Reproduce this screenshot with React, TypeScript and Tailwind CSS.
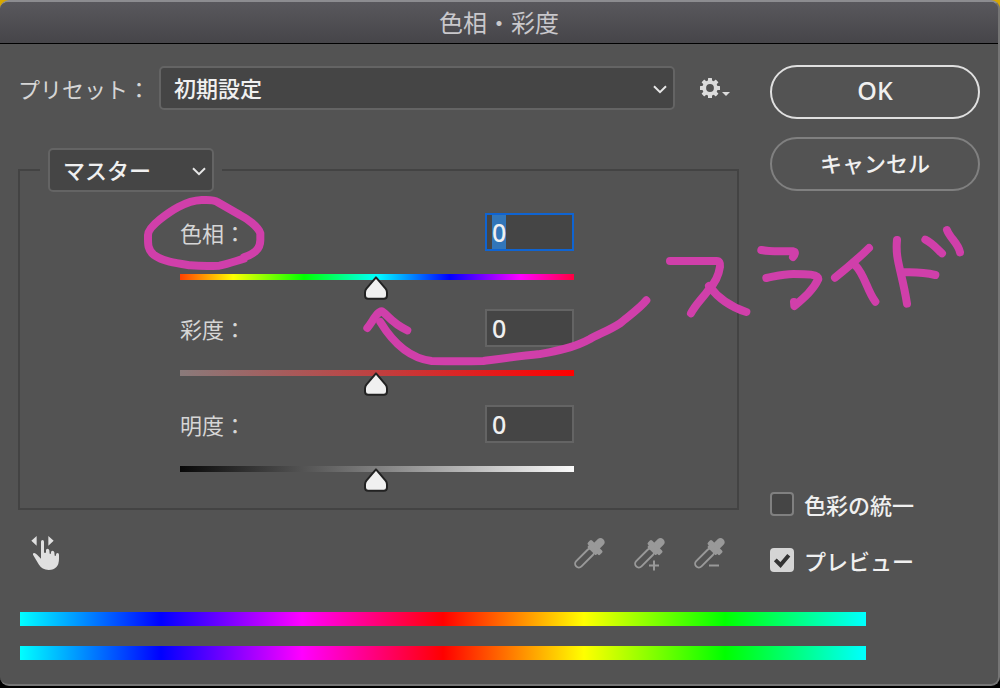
import { useEffect, useRef, useState } from "react";
import type { ReactNode } from "react";

function Chevron() {
  return (
    <svg viewBox="0 0 14 9" className="pointer-events-none absolute top-[19px] right-2 h-[9px] w-[14px]" fill="none" stroke="#e6e6e6" strokeWidth="2">
      <path d="M1 1.2 L7 7.2 L13 1.2" />
    </svg>
  );
}

function Select({ label, options }: { label: string; options: string[] }) {
  return (
    <div className="relative w-full">
      <select
        aria-label={label}
        className="block h-[44px] w-full appearance-none rounded-[5px] border-2 border-[#646464] bg-[#454545] pr-8 pb-[2px] pl-[13px] text-[22px] font-medium text-[#f0f0f0] outline-none"
      >
        {options.map((o) => (
          <option key={o}>{o}</option>
        ))}
      </select>
      <Chevron />
    </div>
  );
}

function Gear() {
  const teeth = [0, 45, 90, 135, 180, 225, 270, 315];
  return (
    <svg viewBox="0 0 32 22" className="h-[22px] w-[32px]" fill="#dcdcdc">
      <circle cx="11" cy="11" r="5.8" fill="none" stroke="#dcdcdc" strokeWidth="3.8" />
      {teeth.map((a) => (
        <rect key={a} x="9" y="1" width="4" height="4" rx="0.5" transform={`rotate(${a} 11 11)`} />
      ))}
      <path d="M23 15 h8 l-4 4 z" />
    </svg>
  );
}

function Thumb() {
  return (
    <svg viewBox="0 0 24 24" className="pointer-events-none absolute top-[2px] h-[24px] w-[24px]" style={{ left: "calc(50% - 13px)" }}>
      <path
        d="M12 1.4 L21.6 12.6 Q23 14.4 23 16.4 V19.6 Q23 22.8 19.8 22.8 H4.2 Q1 22.8 1 19.6 V16.4 Q1 14.4 2.4 12.6 Z"
        fill="#f0f0f0"
        stroke="#222"
        strokeWidth="2"
        strokeLinejoin="round"
      />
    </svg>
  );
}

function SliderRow({ id, label, track, active }: { id: string; label: string; track: string; active?: boolean }) {
  const ref = useRef<HTMLInputElement>(null);
  useEffect(() => {
    if (active) {
      ref.current?.focus();
      ref.current?.select();
    }
  }, [active]);
  return (
    <div>
      <div className="flex items-center justify-between">
        <label htmlFor={id} className="text-[22px] leading-[38px] text-[#d6d6d6]">
          {label}
        </label>
        <input
          ref={ref}
          id={id}
          type="text"
          defaultValue="0"
          className="h-[38px] w-[89px] border-2 border-[#646464] bg-[#454545] px-[5px] font-['Noto_Sans'] text-[25px] leading-[32px] font-medium text-[#f0f0f0] outline-none selection:bg-[#3276b9] selection:text-[#f0f0f0] focus:border-[#0f64d2]"
        />
      </div>
      <div className="relative mt-[23px] h-[26px]">
        <div className={`h-[6px] ${track}`} />
        <Thumb />
        <input type="range" min={-100} max={100} defaultValue={0} aria-label={label} className="absolute inset-0 h-full w-full opacity-0" />
      </div>
    </div>
  );
}

function Dropper({ label, children }: { label: string; children?: ReactNode }) {
  return (
    <button type="button" aria-label={label} className="block">
      <svg viewBox="0 0 32 36" className="h-[36px] w-[32px]" fill="#999">
        <g transform="translate(16.3 17.300) rotate(45)">
          <rect x="-4" y="-19.8" width="8" height="14" rx="4" />
          <rect x="-8.600" y="-11" width="17.200" height="5.800" rx="1.6" />
          <rect x="-6" y="-8.5" width="12" height="5.500" rx="1" />
          <rect x="-3.7" y="-5" width="7.4" height="23.5" rx="3.7" fill="none" stroke="#999" strokeWidth="1.9" />
        </g>
        {children}
      </svg>
    </button>
  );
}

function Hand() {
  return (
    <svg viewBox="93 108 87 108" className="h-[36px] w-[29px]" fill="#e0e0e0">
      <path d="M94 122 L110 108 V137 Z M161 122 L145 108 V137 Z" />
      <path d="M123 125 Q123 120 127.500 120 Q132 120 132 125 V158 H138 V151 Q138 146 142.500 146 Q147 146 148 151 L149 161 H153 V157 Q153 152 157.500 152 Q162 152 163 157 L164 167 H168 V164 Q168 159 172.500 159 Q177 159 177 164 V176 Q177 209 146 210 Q126 210 116 193 L99 164 Q98 158 103 159 Q108 160 112 165 L123 176 Z" />
    </svg>
  );
}

function Check({ label, initial }: { label: string; initial: boolean }) {
  const [on, setOn] = useState(initial);
  return (
    <label className="flex h-6 items-center gap-[10px] text-[22px] font-medium text-[#f0f0f0]">
      <span className="relative h-6 w-6">
        <input
          type="checkbox"
          checked={on}
          onChange={(e) => setOn(e.target.checked)}
          className="block h-6 w-6 appearance-none rounded-[4px] border-2 border-[#808080] bg-[#454545] checked:border-[#d5d5d5] checked:bg-[#d5d5d5]"
        />
        {on && (
          <svg viewBox="0 0 24 24" className="pointer-events-none absolute inset-0" fill="none" stroke="#333" strokeWidth="4">
            <path d="M5.300 11.800 L10.500 17 L18.800 7.300" />
          </svg>
        )}
      </span>
      {label}
    </label>
  );
}

function Annotation() {
  return (
    <svg viewBox="0 0 1000 688" className="pointer-events-none absolute top-0 left-0 h-[688px] w-[1000px]" fill="none" stroke="#d03faa" strokeWidth="24" strokeLinecap="round" strokeLinejoin="round">
      <g transform="translate(130 190) scale(0.33333)">
        <path d="M342 202 C370 192 391 180 391 150 V130 C385 110 350 85 330 75 L262 36 C250 28 235 30 215 30 C165 32 120 65 90 88 C65 108 54 125 54 135 C54 160 52 180 72 195 C100 215 140 220 180 226 C210 228 240 228 268 227 C295 222 315 214 342 206" />
      </g>
      <g transform="translate(360 200) scale(0.33333)">
        <path d="M859 301 C840 325 810 345 780 370 C750 390 710 405 690 417 C640 445 580 455 540 462 C480 468 430 475 370 483 C320 484 270 484 215 483 C150 475 100 430 61 366" />
        <path d="M22 384 C40 362 50 335 66 334 C78 340 95 370 142 391" />
      </g>
      <g transform="translate(640 210) scale(0.33333)">
        <path d="M90 153 H230 Q242 153 240 170 C235 205 215 230 205 240 C190 262 165 285 153 310" />
        <path d="M207 228 C235 265 275 292 319 306" />
        <path d="M364 120 C380 124 400 124 420 124 H460 Q470 126 459 141" />
        <path d="M379 204 C410 198 430 192 460 192 C500 192 535 192 535 207 C520 240 490 265 463 288 L462 276" />
        <path d="M687 114 C655 145 620 175 585 203 M645 165 C675 195 680 240 706 275" />
        <path d="M771 90 C765 150 785 180 801 281 M790 187 C820 186 850 186 886 195" />
        <path d="M856 89 C875 98 890 115 906 130 M921 60 C930 85 955 100 960 127" />
      </g>
    </svg>
  );
}

const pill = "h-[54px] w-full rounded-full border-2 font-medium text-[#f0f0f0]";
const spectrum =
  "h-[14px] bg-[linear-gradient(to_right,#0ff,#00f,#f0f,#f00,#ff0,#0f0,#0ff)]";

export default function App() {
  return (
    <div className="relative min-h-screen overflow-hidden bg-[linear-gradient(#d8a800_50%,#000_50%)] pb-[2px] font-['Noto_Sans_CJK_JP',sans-serif]">
      <div className="overflow-hidden rounded-[9px] border-t-2 border-r-2 border-b-2 border-t-[#8c8c90] border-r-[#757575] border-b-[#757575] bg-[#535353]">
        <h1 className="border-b border-black bg-linear-to-b from-[#59585d] to-[#464549] pb-[2px] text-center text-[24px] leading-[39px] font-normal text-[#c9c8cc]">
          色相・彩度
        </h1>
        <main className="pt-[21px] pb-6">
          <div className="flex gap-[31px] pr-[18px] pl-[18px]">
            <div className="min-w-0 flex-1">
              <div className="flex h-[46px] items-center">
                <span className="w-[141px] shrink-0 text-[22px] text-[#d6d6d6]">プリセット：</span>
                <div className="flex-1">
                  <Select label="プリセット" options={["初期設定"]} />
                </div>
                <button type="button" aria-label="プリセットオプション" className="mr-2 ml-6">
                  <Gear />
                </button>
              </div>
              <fieldset className="mt-[37px] border-2 border-[#434343] pr-[163px] pb-4 pl-[160px]">
                <legend className="ml-[-140px] w-[182px] px-2">
                  <Select label="チャンネル" options={["マスター"]} />
                </legend>
                <div className="flex flex-col gap-[9px] pt-[21px]">
                  <SliderRow id="hue" label="色相：" active track="bg-[linear-gradient(to_right,#ff4000,#ff0_13.5%,#0f0_31.5%,#0ff_50%,#00f_68.5%,#f0f_86.5%,#ff0040)]" />
                  <SliderRow id="saturation" label="彩度：" track="bg-[linear-gradient(to_right,#8a7b7b,#c04040_50%,#f00)]" />
                  <SliderRow id="lightness" label="明度：" track="bg-[linear-gradient(to_right,#080808,#535353_31%,#808080_50%,#fafafa)]" />
                </div>
              </fieldset>
              <div className="mt-[26px] flex items-center justify-between pr-[14px] pl-[13px]">
                <button type="button" aria-label="画面上で調整">
                  <Hand />
                </button>
                <div className="flex gap-7">
                  <Dropper label="スポイト" />
                  <Dropper label="サンプルに追加">
                    <path d="M16 29.500 H26 M21 24.500 V34.500" stroke="#999" strokeWidth="2" />
                  </Dropper>
                  <Dropper label="サンプルから除外">
                    <path d="M16 29.500 H26" stroke="#999" strokeWidth="2" />
                  </Dropper>
                </div>
              </div>
            </div>
            <div className="flex w-[210px] shrink-0 flex-col">
              <button type="button" className={`${pill} border-[#e0e0e0] pb-[2px] font-['Noto_Sans'] text-[25px]`}>
                OK
              </button>
              <button type="button" className={`${pill} mt-[18px] border-[#808080] pb-1 text-[22px]`}>
                キャンセル
              </button>
              <div className="mt-auto flex flex-col gap-8">
                <Check label="色彩の統一" initial={false} />
                <Check label="プレビュー" initial={true} />
              </div>
            </div>
          </div>
          <div className="mt-10 mr-[132px] ml-5 flex flex-col gap-5">
            <div className={spectrum} />
            <div className={spectrum} />
          </div>
        </main>
      </div>
      <Annotation />
    </div>
  );
}
